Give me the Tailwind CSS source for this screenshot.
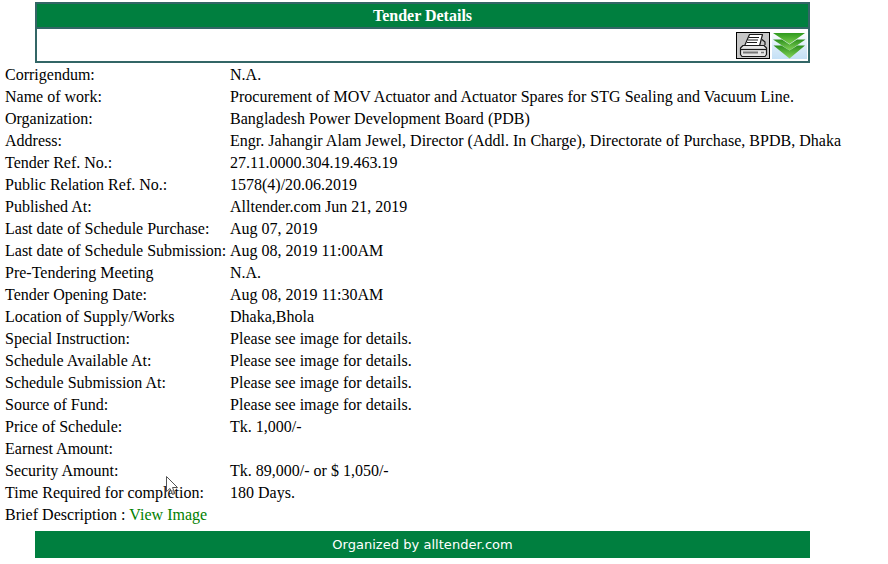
<!DOCTYPE html>
<html lang="en">
<head>
<meta charset="UTF-8">
<title>Tender Details</title>
<script src="https://cdn.jsdelivr.net/npm/@tailwindcss/browser@4"></script>
</head>
<body class="bg-white text-black font-['Liberation_Serif',serif] text-[16px] leading-[22px] relative h-[564px] overflow-hidden">
  <!-- Header box -->
  <div class="ml-[35px] mt-[2px] w-[775px] h-[61px] border-2 border-[#336666] flex flex-col">
    <div class="h-[23px] bg-[#007f3f] text-white font-bold text-center leading-[23px]">Tender Details</div>
    <div class="h-[2px] bg-[#336666]"></div>
    <div class="flex-1 flex justify-end items-center gap-[2px] pr-[1px] pt-[1px]">
      <div class="w-[34px] h-[27px] bg-[#c6c6c6] border border-black flex items-center justify-center">
        <svg width="32" height="25" viewBox="0 0 32 25" fill="none" stroke="#1a1a1a" stroke-width="1.2" stroke-linejoin="round">
          <path d="M12.5 1.5h13l-3 11.5h-15z" fill="#fff"/>
          <path d="M12 4.5h10M11 7h10M10 9.5h10" stroke-width="1"/>
          <path d="M25 6.5l3 2.5v3" />
          <path d="M6 12.5h21l2.5 2.5v6.5l-1.5 2h-23l-1.500-2v-6.500z" fill="#e6e6e6"/>
          <path d="M3 16.500h26" />
          <path d="M6 19.500h15" stroke="#777" stroke-width="2"/>
          <path d="M24 19.500h3" stroke="#777" stroke-width="1.500"/>
        </svg>
      </div>
      <svg width="35" height="27" viewBox="0 0 35 27">
        <defs>
          <linearGradient id="bg" x1="0" y1="0" x2="0" y2="1">
            <stop offset="0" stop-color="#ffffff"/>
            <stop offset="0.5" stop-color="#dcecf8"/>
            <stop offset="1" stop-color="#c4e0f6"/>
          </linearGradient>
          <linearGradient id="c1" x1="0" y1="0" x2="0" y2="1">
            <stop offset="0" stop-color="#2f9a1e"/>
            <stop offset="1" stop-color="#7ccf4e"/>
          </linearGradient>
          <linearGradient id="c2" x1="0" y1="0" x2="0" y2="1">
            <stop offset="0" stop-color="#2c8f1c"/>
            <stop offset="1" stop-color="#86d65a"/>
          </linearGradient>
        </defs>
        <rect width="35" height="27" fill="url(#bg)"/>
        <path d="M1 1h32l-15.500 11z" fill="url(#c1)"/>
        <path d="M1 7.500h9l7.500 5 7.500-5h8.500l-16 11z" fill="url(#c2)"/>
        <path d="M1.500 13.500h8l8 5 8-5h7.500l-15.500 13z" fill="url(#c2)"/>
      </svg>
    </div>
  </div>

  <!-- Detail rows -->
  <div class="mt-[1px] ml-[5px] grid grid-cols-[225px_1fr] whitespace-nowrap">
    <div>Corrigendum:</div><div class="tracking-[0.03px]">N.A.</div>
    <div>Name of work:</div><div class="tracking-[0.03px]">Procurement of MOV Actuator and Actuator Spares for STG Sealing and Vacuum Line.</div>
    <div>Organization:</div><div class="tracking-[0.03px]">Bangladesh Power Development Board (PDB)</div>
    <div>Address:</div><div class="tracking-[0.02px]">Engr. Jahangir Alam Jewel, Director (Addl. In Charge), Directorate of Purchase, BPDB, Dhaka</div>
    <div>Tender Ref. No.:</div><div>27.11.0000.304.19.463.19</div>
    <div>Public Relation Ref. No.:</div><div>1578(4)/20.06.2019</div>
    <div>Published At:</div><div>Alltender.com Jun 21, 2019</div>
    <div>Last date of Schedule Purchase:</div><div>Aug 07, 2019</div>
    <div>Last date of Schedule Submission:</div><div>Aug 08, 2019 11:00AM</div>
    <div>Pre-Tendering Meeting</div><div>N.A.</div>
    <div>Tender Opening Date:</div><div>Aug 08, 2019 11:30AM</div>
    <div>Location of Supply/Works</div><div>Dhaka,Bhola</div>
    <div>Special Instruction:</div><div class="tracking-[0.03px]">Please see image for details.</div>
    <div>Schedule Available At:</div><div class="tracking-[0.03px]">Please see image for details.</div>
    <div>Schedule Submission At:</div><div class="tracking-[0.03px]">Please see image for details.</div>
    <div>Source of Fund:</div><div class="tracking-[0.03px]">Please see image for details.</div>
    <div>Price of Schedule:</div><div>Tk. 1,000/-</div>
    <div>Earnest Amount:</div><div></div>
    <div>Security Amount:</div><div>Tk. 89,000/- or $ 1,050/-</div>
    <div>Time Required for completion:</div><div>180 Days.</div>
    <div class="col-span-2 tracking-[0.03px]">Brief Description : <a href="#" class="text-[#008000]">View Image</a></div>
  </div>

  <!-- Footer -->
  <div class="mt-[5px] ml-[35px] w-[775px] h-[27px] bg-[#007f3f] text-white text-center font-['DejaVu_Sans',sans-serif] text-[13px] tracking-[0.04px] leading-[27px]">Organized by alltender.com</div>

  <!-- Mouse pointer captured in the screenshot -->
  <svg class="absolute left-[166px] top-[476px]" width="14" height="21" viewBox="0 0 14 21">
    <path d="M0.5 0.5v15l3.500-3 2.500 6 2.500-1-2.500-6h5z" fill="#fff" fill-opacity="0.6" stroke="#555" stroke-width="1"/>
  </svg>
</body>
</html>
